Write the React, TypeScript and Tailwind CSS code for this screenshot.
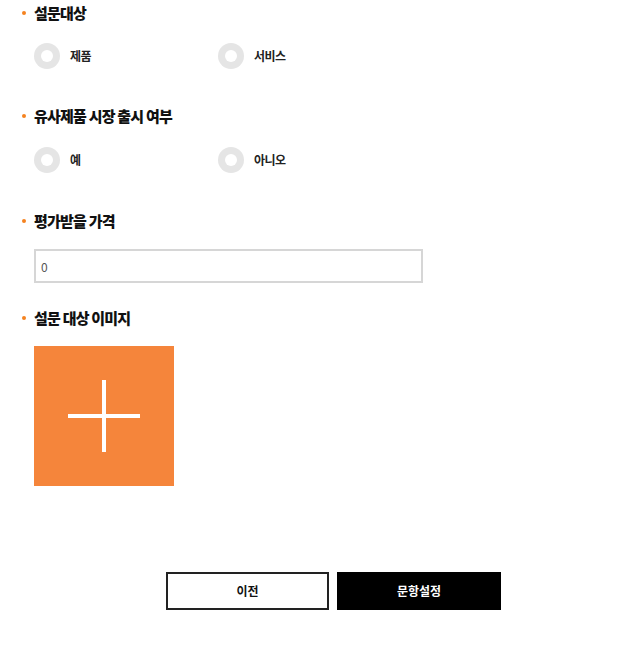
import React from 'react';

const font = { fontFamily: '"Noto Sans CJK KR", "Noto Sans", sans-serif' };

function Heading({ children }: { children: React.ReactNode }) {
  return (
    <div className="flex items-center h-5 pl-[22px]">
      <span className="w-[4px] h-[4px] rounded-full bg-[#f5821f] mr-[8px]" />
      <span className="text-[15px] font-extrabold text-[#111] tracking-[-0.8px] leading-5">{children}</span>
    </div>
  );
}

function Radio({ label }: { label: string }) {
  return (
    <label className="flex items-center w-[184px]">
      <span className="w-[26px] h-[26px] rounded-full bg-[#e5e5e5] flex items-center justify-center">
        <span className="w-[12px] h-[12px] rounded-full bg-white" />
      </span>
      <span className="ml-[10px] text-[12px] font-bold text-[#222] tracking-[-0.5px]">{label}</span>
    </label>
  );
}

export default function App() {
  return (
    <div className="w-[630px] h-[649px] bg-white" style={font}>
      <div className="flex flex-col pt-[3px]">
        <Heading>설문대상</Heading>
        <div className="flex pl-[34px] mt-[20px]">
          <Radio label="제품" />
          <Radio label="서비스" />
        </div>

        <div className="mt-[37px]">
          <Heading>유사제품 시장 출시 여부</Heading>
        </div>
        <div className="flex pl-[34px] mt-[21px]">
          <Radio label="예" />
          <Radio label="아니오" />
        </div>

        <div className="mt-[38px]">
          <Heading>평가받을 가격</Heading>
        </div>
        <div className="pl-[34px] mt-[18px]">
          <input
            readOnly
            value="0"
            className="w-[389px] h-[34px] border-2 border-[#d6d6d6] px-[5px] text-[12px] text-[#555] outline-none"
          />
        </div>

        <div className="mt-[25px]">
          <Heading>설문 대상 이미지</Heading>
        </div>
        <div className="pl-[34px] mt-[18px]">
          <button className="w-[140px] h-[140px] bg-[#f5853b] flex items-center justify-center">
            <svg width="72" height="72" viewBox="0 0 72 72">
              <rect x="0" y="34" width="72" height="4" fill="#fff" />
              <rect x="34" y="0" width="4" height="72" fill="#fff" />
            </svg>
          </button>
        </div>

        <div className="flex gap-[8px] pl-[166px] mt-[86px]">
          <button className="w-[163px] h-[38px] border-2 border-[#222] bg-white text-[12px] font-bold text-[#111]">
            이전
          </button>
          <button className="w-[164px] h-[38px] bg-black text-[12px] font-bold text-white">
            문항설정
          </button>
        </div>
      </div>
    </div>
  );
}
